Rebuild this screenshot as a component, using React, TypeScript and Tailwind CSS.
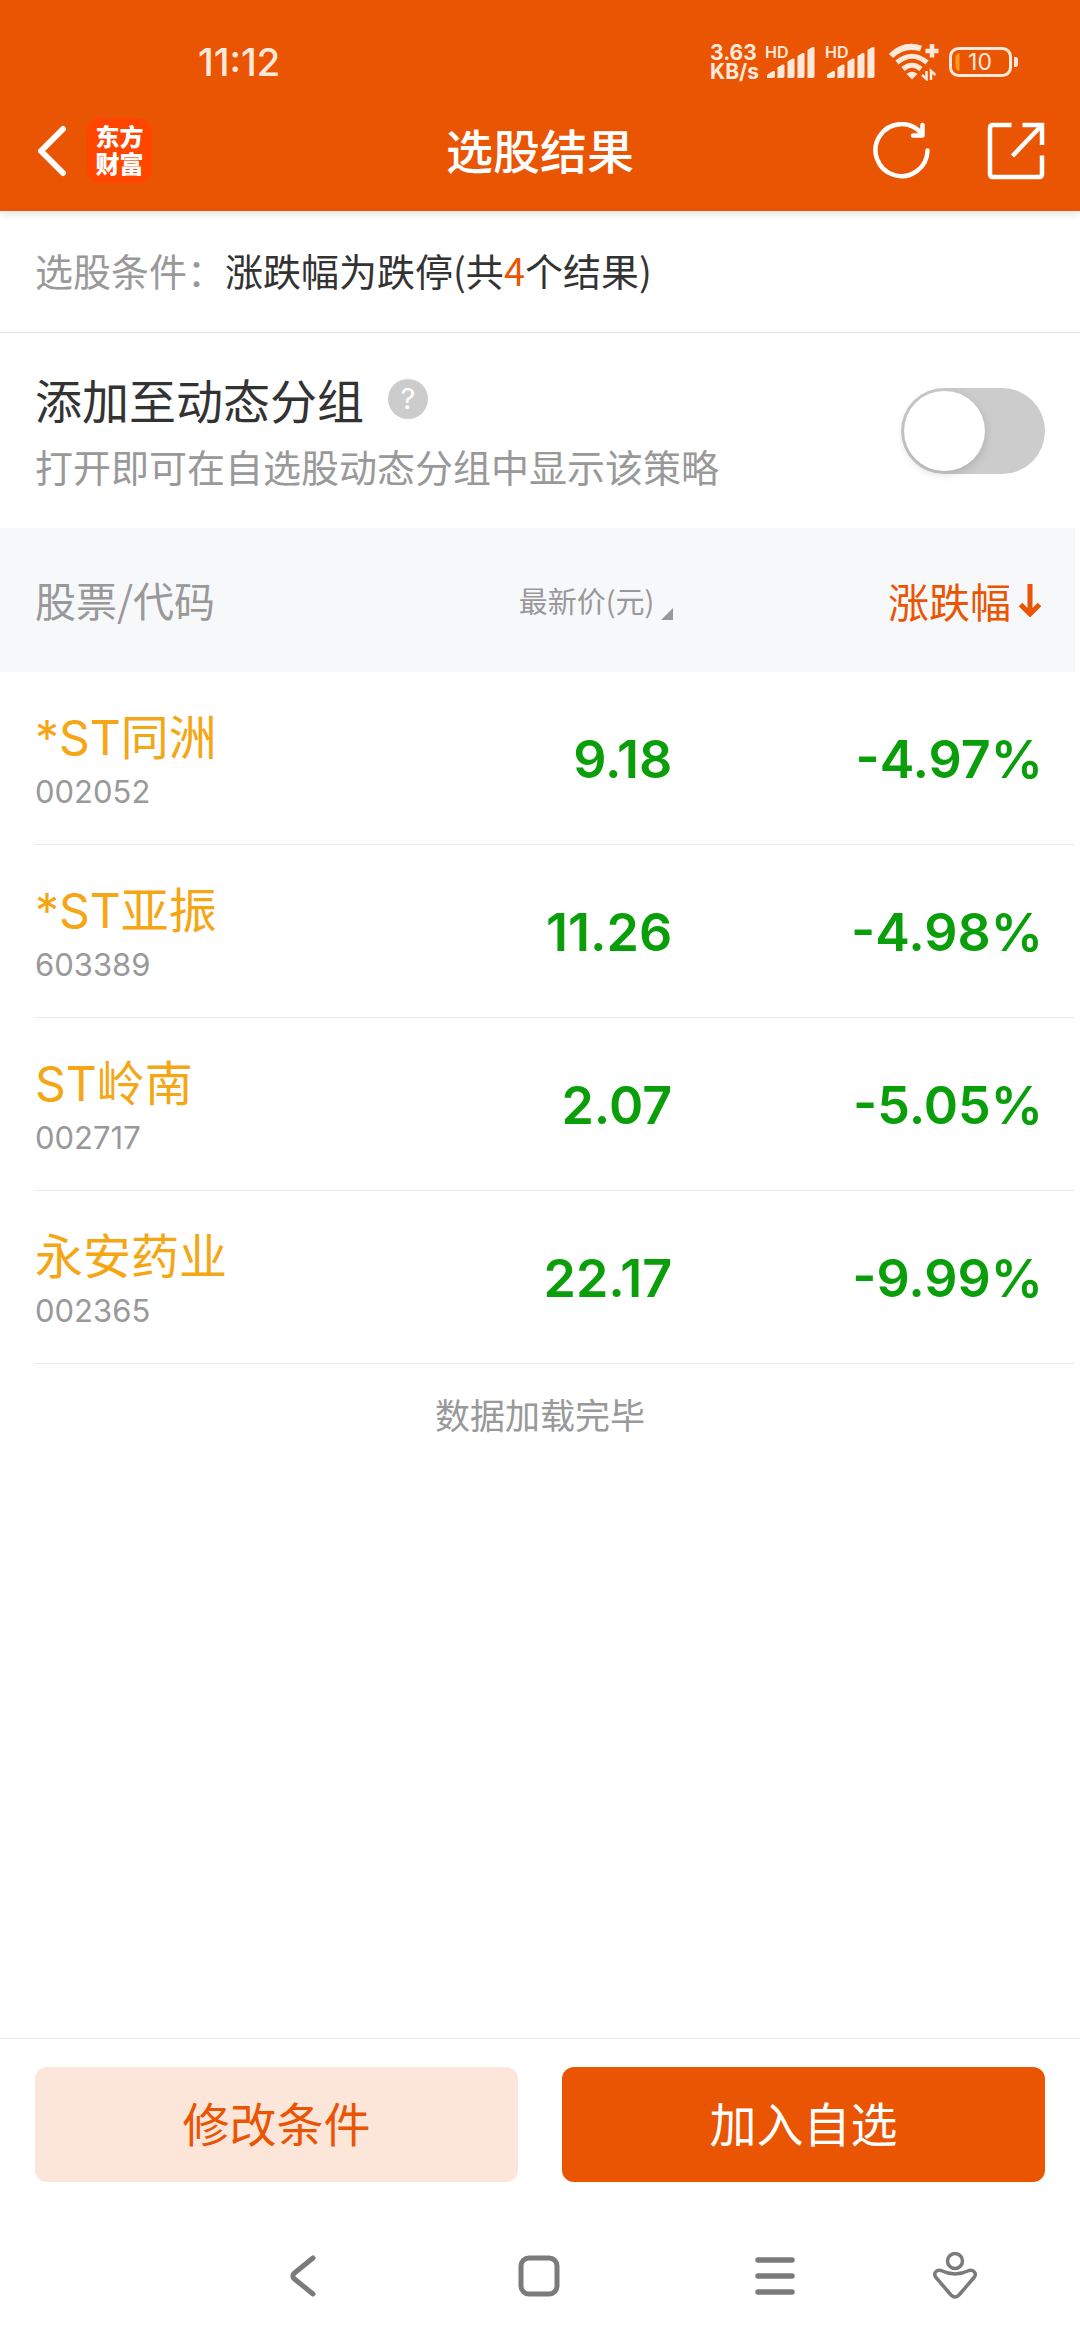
import { useState } from "react";

const stocks = [
  { name: "*ST同洲", code: "002052", price: "9.18", change: "-4.97%" },
  { name: "*ST亚振", code: "603389", price: "11.26", change: "-4.98%" },
  { name: "ST岭南", code: "002717", price: "2.07", change: "-5.05%" },
  { name: "永安药业", code: "002365", price: "22.17", change: "-9.99%" },
];

function SignalBars() {
  return (
    <svg width="52" height="40" viewBox="0 -2 52 40" fill="currentColor" aria-hidden="true">
      <text x="0" y="14" fontSize="16" fontWeight="600" fontFamily="Inter, sans-serif">HD</text>
      <path d="M2 34v-2q0-1.500 1-2l5-3q2-.5 2 1v4q0 2-2 2z" />
      <path d="M12.500 34v-10.500l5-3q2-.5 2 1v10.500q0 2-2 2z" />
      <path d="M22.500 34v-16.500l5-3q2-.5 2 1v16.500q0 2-2 2z" />
      <path d="M32.500 34v-22l5-3q2-.5 2 1v22q0 2-2 2z" />
      <path d="M42.500 34v-28l5-3q2-.5 2 1v28q0 2-2 2z" />
    </svg>
  );
}

function WifiIcon() {
  return (
    <svg width="50" height="38" viewBox="0 0 50 38" fill="none" stroke="currentColor" aria-hidden="true">
      <path d="M2 13Q15 0 32 5.500" strokeWidth="6" />
      <path d="M8 19.500Q23 7 38 19.500" strokeWidth="5" />
      <path d="M14 26Q23 18.500 32 26" strokeWidth="5" />
      <path d="M17.500 31Q23 26.500 28.500 31L23 36.500z" fill="currentColor" stroke="none" />
      <path d="M43 1v13.500M36.500 8h13" strokeWidth="4.500" />
      <path d="M37.500 28v8l-4.500-4M42 37v-9l4.500 4" strokeWidth="2.500" />
    </svg>
  );
}

function BatteryIcon() {
  return (
    <svg width="70" height="32" viewBox="0 0 70 32" fill="none" aria-hidden="true">
      <rect x="1.500" y="2.500" width="60" height="27" rx="8" stroke="currentColor" strokeWidth="3" />
      <path d="M10.500 7v18q-4-.5-4-5v-8q0-4.500 4-5z" fill="#ff9a1a" />
      <path d="M65 11h1.500q2.500 0 2.500 2.500v5q0 2.500-2.500 2.500H65z" fill="currentColor" />
      <text x="31" y="24" textAnchor="middle" fontSize="23" fontFamily="Inter, sans-serif" fill="currentColor">10</text>
    </svg>
  );
}

function StatusBar() {
  return (
    <div className="flex h-[118px] items-center justify-between pl-[198px] pr-[61px] pt-1.5 font-['Inter','Noto_Sans_CJK_SC',sans-serif] text-[#ffe9db]">
      <span className="text-[38px] font-medium leading-[40px]">11:12</span>
      <div className="flex items-center">
        <div className="mr-1.5 text-[21px] font-bold leading-[19px]">
          <div>3.63</div>
          <div>KB/s</div>
        </div>
        <div className="mr-3 flex gap-2">
          <SignalBars />
          <SignalBars />
        </div>
        <div className="mr-2.5">
          <WifiIcon />
        </div>
        <BatteryIcon />
      </div>
    </div>
  );
}

function TitleBar() {
  return (
    <div className="grid grid-cols-3 items-center px-[35px] text-white">
      <div className="flex items-center gap-[20px]">
        <button type="button" aria-label="返回">
          <svg width="32" height="56" viewBox="0 0 32 56" fill="none" stroke="currentColor" strokeWidth="6" strokeLinecap="round" strokeLinejoin="round">
            <path d="M28 6L6 28l22 22" />
          </svg>
        </button>
        <div className="flex h-[65px] w-[65px] flex-col items-center justify-center rounded-[14px] bg-[#ff4500] pb-1 text-[24px] font-black leading-[27px]">
          <span>东方</span>
          <span>财富</span>
        </div>
      </div>
      <h1 className="pb-1 text-center text-[47px] font-medium leading-[56px]">选股结果</h1>
      <div className="flex justify-end gap-[56px]">
        <button type="button" aria-label="刷新">
          <svg width="58" height="58" viewBox="0 0 58 58" fill="none" stroke="currentColor" strokeWidth="4.500" strokeLinecap="round" strokeLinejoin="round">
            <path d="M54.500 28.500A26 26 0 1 1 48.500 11.500" />
            <path d="M49.500 3v10.500H40" />
          </svg>
        </button>
        <button type="button" aria-label="分享">
          <svg width="58" height="58" viewBox="0 0 58 58" fill="none" stroke="currentColor" strokeWidth="4.500">
            <path d="M24.500 3H6Q3 3 3 6v46q0 3 3 3h46q3 0 3-3V33.500" />
            <path d="M35.500 3H55v20M55 3L25.500 34" />
          </svg>
        </button>
      </div>
    </div>
  );
}

function DynamicGroup() {
  const [enabled, setEnabled] = useState(false);

  return (
    <section className="flex h-[195px] items-center justify-between px-[35px]">
      <div>
        <div className="flex items-center gap-[24px]">
          <label htmlFor="dynamic-group" className="text-[47px] leading-[70px] text-[#333]">
            添加至动态分组
          </label>
          <button
            type="button"
            aria-label="帮助"
            className="flex h-[40px] w-[40px] items-center justify-center rounded-full bg-[#ccc] font-['Inter',sans-serif] text-[29px] leading-[40px] text-white"
          >
            ?
          </button>
        </div>
        <p className="text-[38px] leading-[64px] text-[#999]">打开即可在自选股动态分组中显示该策略</p>
      </div>
      <input
        id="dynamic-group"
        type="checkbox"
        role="switch"
        checked={enabled}
        onChange={(e) => setEnabled(e.target.checked)}
        className="h-[86px] w-[144px] shrink-0 appearance-none rounded-full bg-[#ccc] p-[3px] before:block before:h-[80px] before:w-[81px] before:rounded-full before:bg-white before:shadow-[0_3px_10px_rgba(0,0,0,0.15)] before:transition-transform checked:bg-[#ea5504] checked:before:translate-x-[57px]"
      />
    </section>
  );
}

function StockTable() {
  return (
    <div className="pr-[5px]">
      <table className="w-full table-fixed border-separate border-spacing-0">
        <thead>
          <tr className="h-[144px] bg-[#f7f8fa] text-[#999]">
            <th className="w-[32%] pl-[35px] text-left text-[41px] font-normal">股票/代码</th>
            <th className="w-[31%] pr-[4px] text-right font-normal">
              <button type="button" className="inline-flex items-end gap-[7px] text-[29px] leading-[40px]">
                最新价(元)
                <svg width="12" height="12" viewBox="0 0 12 12" fill="currentColor" aria-hidden="true">
                  <path d="M12 0v12H0z" />
                </svg>
              </button>
            </th>
            <th className="pr-[32px] text-right font-normal">
              <button type="button" className="inline-flex items-center gap-[8px] text-[41px] leading-[56px] text-[#ea5504]">
                涨跌幅
                <svg width="24" height="34" viewBox="0 0 24 34" fill="none" stroke="currentColor" strokeWidth="5" aria-hidden="true">
                  <path d="M11 1v31M1.500 21.500l9.500 9.500 9.500-9.500" />
                </svg>
              </button>
            </th>
          </tr>
        </thead>
        <tbody className="font-['Inter','Noto_Sans_CJK_SC',sans-serif]">
          {stocks.map((stock) => (
            <tr key={stock.code}>
              <td className="p-0">
                <div className="ml-[35px] flex h-[173px] flex-col justify-center border-b border-[#ebebeb] pt-2">
                  <div className="text-[48px] leading-[60px] text-[#f4a614]">{stock.name}</div>
                  <div className="text-[31px] leading-[48px] text-[#999]">{stock.code}</div>
                </div>
              </td>
              <td className="border-b border-[#ebebeb] pr-[5px] pt-1 text-right text-[52px] font-semibold text-[#0a9f0a]">
                {stock.price}
              </td>
              <td className="border-b border-[#ebebeb] pr-[32px] pt-1 text-right text-[52px] font-semibold text-[#0a9f0a]">
                {stock.change}
              </td>
            </tr>
          ))}
        </tbody>
      </table>
    </div>
  );
}

function SystemNav() {
  return (
    <nav className="grid h-[128px] grid-cols-[185fr_236fr_236fr_236fr_124fr_63fr] items-center justify-items-center text-[#7b7b7b]">
      <button type="button" aria-label="后退" className="col-start-2">
        <svg width="44" height="48" viewBox="0 0 44 48" fill="none" stroke="currentColor" strokeWidth="5" strokeLinecap="round">
          <path d="M32 6L13.500 21q-3.500 3 0 6L32 42" />
        </svg>
      </button>
      <button type="button" aria-label="主页">
        <svg width="44" height="48" viewBox="0 0 44 48" fill="none" stroke="currentColor" strokeWidth="5">
          <rect x="4" y="6" width="36" height="36" rx="8" />
        </svg>
      </button>
      <button type="button" aria-label="最近任务">
        <svg width="44" height="48" viewBox="0 0 44 48" fill="none" stroke="currentColor" strokeWidth="5.500" strokeLinecap="round">
          <path d="M5 8h34M5 24h34M5 40h34" />
        </svg>
      </button>
      <button type="button" aria-label="无障碍">
        <svg width="44" height="48" viewBox="0 0 44 48" fill="none" stroke="currentColor" strokeWidth="3.500" strokeLinejoin="round">
          <circle cx="22" cy="9" r="7.500" />
          <path d="M8 18.500q14 7 28 0c5-1.500 8 3.500 5 7L26 43q-4 4-8 0L3 25.500c-3-3.500 0-8.500 5-7z" />
        </svg>
      </button>
    </nav>
  );
}

export default function App() {
  return (
    <div className="flex min-h-screen flex-col bg-white font-['Noto_Sans_CJK_SC',sans-serif]">
      <header className="relative bg-[#ea5504] pb-[28px] shadow-[0_2px_8px_rgba(0,0,0,0.15)]">
        <StatusBar />
        <TitleBar />
      </header>

      <main className="flex-1">
        <p className="h-[122px] border-b border-[#e2e2e2] px-[35px] text-[38px] leading-[117px] text-[#333]">
          <span className="text-[#999]">选股条件：</span>
          涨跌幅为跌停(共<span className="text-[#ea5504]">4</span>个结果)
        </p>
        <DynamicGroup />
        <StockTable />
        <p className="pt-6 text-center text-[35px] leading-[52px] text-[#999]">数据加载完毕</p>
      </main>

      <footer>
        <div className="grid grid-cols-2 gap-[44px] border-t border-[#ebebeb] px-[35px] pb-[30px] pt-[28px] text-[47px]">
          <button type="button" className="h-[115px] rounded-xl bg-[#fce6da] pb-1 text-[#ea5504]">修改条件</button>
          <button type="button" className="h-[115px] rounded-xl bg-[#ea5504] pb-1 text-white">加入自选</button>
        </div>
        <SystemNav />
      </footer>
    </div>
  );
}
